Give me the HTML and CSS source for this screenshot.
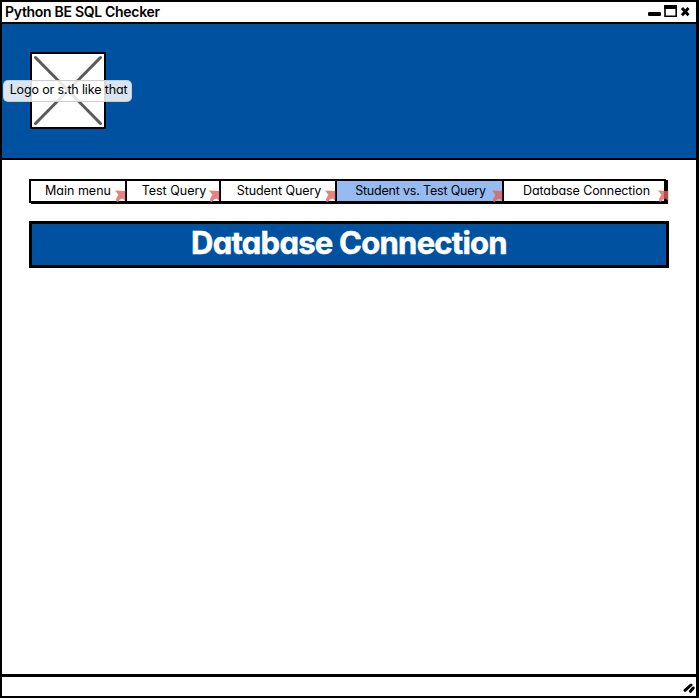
FILE: index.html
```html
<!DOCTYPE html>
<html lang="en">
<head>
<meta charset="utf-8">
<title>Python BE SQL Checker</title>
<link rel="stylesheet" href="styles.css">
</head>
<body>
<svg class="defs" width="0" height="0" aria-hidden="true">
  <symbol id="link" viewBox="0 0 11 12"><path d="M0 .5L10.3 1V11L7.7 8.4 4.8 9.4 3 12H1.5L1 9 3.4 4.8Z"/></symbol>
</svg>
<div class="window">
  <div class="titlebar">
    <span class="title">Python BE SQL Checker</span>
    <svg class="controls" width="44" height="14" viewBox="0 0 44 14" aria-hidden="true">
      <rect x="0" y="8" width="13" height="4" rx="1.3"/>
      <path d="M17 2H28.2V12.2H17Z" fill="none" stroke="#000" stroke-width="1.6"/>
      <path d="M16.2 1H29V5H16.2Z"/>
      <path d="M34 4L40.5 11.2M40.5 4L34 11.2" stroke="#000" stroke-width="2.9"/>
    </svg>
  </div>
  <header class="banner">
    <div class="logo">
      <svg width="72" height="73" viewBox="0 0 72 73" aria-hidden="true">
        <path d="M3.5 3.5L68.5 69.5M68.5 3.5L3.5 69.5" stroke="#5a5a5a" stroke-width="3" stroke-linecap="round"/>
      </svg>
      <span class="logo-label">Logo or s.th like that</span>
    </div>
  </header>
  <main class="content">
    <nav class="tabs">
      <a class="tab main-menu"><span>Main menu</span><svg class="link"><use href="#link"/></svg></a>
      <a class="tab test"><span>Test Query</span><svg class="link"><use href="#link"/></svg></a>
      <a class="tab student"><span>Student Query</span><svg class="link"><use href="#link"/></svg></a>
      <a class="tab versus active"><span>Student vs. Test Query</span><svg class="link"><use href="#link"/></svg></a>
      <a class="tab database"><span>Database Connection</span><svg class="link"><use href="#link"/></svg></a>
    </nav>
    <h1 class="heading"><span>Database Connection</span></h1>
  </main>
  <footer class="statusbar">
    <svg width="13" height="12" viewBox="0 0 13 12" aria-hidden="true">
      <path d="M3 8.3L9 3M8.5 9.3L11.2 6" stroke="#000" stroke-width="3" stroke-linecap="round"/>
    </svg>
  </footer>
</div>
</body>
</html>
```
FILE: styles.css
```css
* { box-sizing: border-box; }
body {
  margin: 0;
  background: #fff;
  color: #000;
  font-family: Inter, "Open Sans", sans-serif;
  font-feature-settings: "cv11";
  font-size: 12.5px;
  white-space: nowrap;
}
.defs { position: absolute; }
.window {
  display: flex;
  flex-direction: column;
  width: 699px;
  height: 698px;
  border: 2px solid #000;
  border-right-width: 3px;
}
.titlebar {
  display: flex;
  justify-content: space-between;
  height: 22px;
  padding: 1px 4px 0 3px;
  border-bottom: 2px solid #000;
}
.title { font-size: 14px; line-height: 17px; font-weight: 600; letter-spacing: -0.3px; }
.controls { margin-top: 1px; }
.banner {
  height: 136px;
  padding: 28px;
  background: #0052a1;
  border-bottom: 2px solid #000;
}
.logo {
  position: relative;
  width: 76px;
  height: 77px;
  background: #fff;
  border: 2px solid #000;
}
.logo svg { display: block; }
.logo-label {
  position: absolute;
  left: -29px;
  top: 26px;
  width: 129px;
  height: 22px;
  border: 1px solid rgba(200, 200, 200, .9);
  border-radius: 5px;
  background: rgba(255, 255, 255, .85);
  padding-left: 2px;
  line-height: 18px;
  letter-spacing: -0.14px;
  text-align: center;
}
.content { flex: 1; padding: 19px 28px 0 27px; }
.tabs {
  display: flex;
  width: 637px;
  height: 24px;
  border: 2px solid #000;
  box-shadow: 2px 1px 0 #000;
}
.tab {
  position: relative;
  height: 20px;
  border-right: 2px solid #000;
  line-height: 19px;
  text-align: center;
}
.tab:last-child { border-right: 0; }
.main-menu { width: 96px; }
.test { width: 94px; padding-left: 2px; }
.student { width: 116px; padding-left: 2px; letter-spacing: -0.1px; }
.versus { width: 167px; padding-left: 2px; letter-spacing: -0.19px; }
.database { flex: 1; padding-left: 5px; letter-spacing: -0.1px; }
.active { background: #95bbf0; }
.link {
  position: absolute;
  right: -1px;
  bottom: -1px;
  width: 11px;
  height: 12px;
  fill: rgba(222, 99, 95, .8);
}
.database .link { right: -5px; }
.heading {
  width: 640px;
  height: 47px;
  margin: 18px 0 0;
  border: 3px solid #000;
  background: #0052a1;
  color: #fff;
  font-size: 31px;
  line-height: 38px;
  font-weight: 700;
  letter-spacing: -0.75px;
  -webkit-text-stroke: .5px #fff;
  text-align: center;
}
.statusbar {
  display: flex;
  justify-content: flex-end;
  height: 22px;
  padding: 5px 1px 0 0;
  border-top: 3px solid #000;
}
```
